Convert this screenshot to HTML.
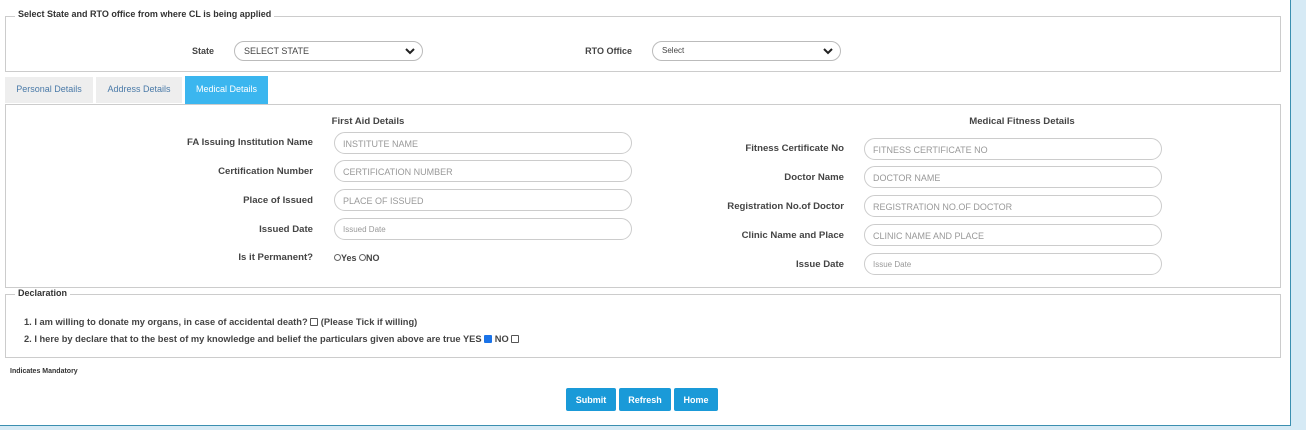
<!DOCTYPE html>
<html><head><meta charset="utf-8"><style>
*{box-sizing:border-box;margin:0;padding:0}
body{width:1306px;height:430px;background:#d6eaf5;font-family:"Liberation Sans",Arial,sans-serif;position:relative;overflow:hidden;color:#333}
.main{position:absolute;left:0;top:0;width:1291px;height:426px;background:#fff;border-right:1px solid #3b8fb0;border-bottom:1px solid #3b8fb0}
.a{position:absolute;white-space:nowrap}
.box{position:absolute;border:1px solid #ccc}
.lg{position:absolute;background:#fff;font-size:9px;font-weight:bold;color:#333;padding:0 3px}
.lb{position:absolute;font-size:9.6px;font-weight:bold;color:#444;text-align:right;white-space:nowrap}
.in{position:absolute;width:298px;height:22px;border:1px solid #ccc;border-radius:11px;font-size:9px;color:#999;padding:6px 0 0 8px;white-space:nowrap}
.sel{position:absolute;height:20px;border:1px solid #bbb;border-radius:10px;font-size:9px;color:#444;padding:4px 0 0 9px}
.sel svg{position:absolute;right:7px;top:5px}
.tab{position:absolute;top:77px;height:26px;background:#eee;font-size:9px;color:#4a7aa8;text-align:center;padding-top:7px}
.btn{position:absolute;top:388px;height:23px;background:#1a9ad8;color:#fff;font-size:9px;font-weight:bold;text-align:center;padding-top:7px;border-radius:2px}
.cb{display:inline-block;width:8px;height:8px;border:1px solid #555;border-radius:1px;vertical-align:-1px}
.rd{display:inline-block;width:7px;height:7px;border:1px solid #666;border-radius:50%;vertical-align:0}
</style></head><body>
<div class="main">
<div class="box" style="left:5px;top:16px;width:1276px;height:56px"></div>
<div class="lg" style="left:15px;top:9px">Select State and RTO office from where CL is being applied</div>
<div class="lb" style="left:150px;width:64px;top:46px;font-size:9px">State</div>
<div class="sel" style="left:234px;top:41px;width:189px">SELECT STATE<svg width="10" height="8" viewBox="0 0 10 8"><path d="M1 2l4 4 4-4" fill="none" stroke="#222" stroke-width="2"/></svg></div>
<div class="lb" style="left:560px;width:72px;top:46px;font-size:9px">RTO Office</div>
<div class="sel" style="left:652px;top:41px;width:189px;font-size:8px">Select<svg width="10" height="8" viewBox="0 0 10 8"><path d="M1 2l4 4 4-4" fill="none" stroke="#222" stroke-width="2"/></svg></div>

<div class="tab" style="left:5px;width:88px">Personal Details</div>
<div class="tab" style="left:96px;width:86px">Address Details</div>
<div class="tab" style="left:185px;width:83px;top:76px;height:28px;background:#3bb6ef;color:#fff;padding-top:8px">Medical Details</div>

<div class="box" style="left:5px;top:104px;width:1276px;height:184px"></div>
<div class="lb" style="left:298px;width:140px;text-align:center;top:116px">First Aid Details</div>
<div class="lb" style="left:100px;width:213px;top:137px">FA Issuing Institution Name</div>
<div class="in" style="left:334px;top:132px">INSTITUTE NAME</div>
<div class="lb" style="left:100px;width:213px;top:166px">Certification Number</div>
<div class="in" style="left:334px;top:160px">CERTIFICATION NUMBER</div>
<div class="lb" style="left:100px;width:213px;top:195px">Place of Issued</div>
<div class="in" style="left:334px;top:189px">PLACE OF ISSUED</div>
<div class="lb" style="left:100px;width:213px;top:224px">Issued Date</div>
<div class="in" style="left:334px;top:218px;font-size:8px">Issued Date</div>
<div class="lb" style="left:100px;width:213px;top:252px">Is it Permanent?</div>
<div class="a" style="left:334px;top:253px;font-size:9px;font-weight:bold;color:#444"><span class="rd"></span>Yes <span class="rd"></span>NO</div>

<div class="lb" style="left:940px;width:164px;text-align:center;top:116px">Medical Fitness Details</div>
<div class="lb" style="left:640px;width:204px;top:143px">Fitness Certificate No</div>
<div class="in" style="left:864px;top:138px">FITNESS CERTIFICATE NO</div>
<div class="lb" style="left:640px;width:204px;top:172px">Doctor Name</div>
<div class="in" style="left:864px;top:166px">DOCTOR NAME</div>
<div class="lb" style="left:640px;width:204px;top:201px">Registration No.of Doctor</div>
<div class="in" style="left:864px;top:195px">REGISTRATION NO.OF DOCTOR</div>
<div class="lb" style="left:640px;width:204px;top:230px">Clinic Name and Place</div>
<div class="in" style="left:864px;top:224px">CLINIC NAME AND PLACE</div>
<div class="lb" style="left:640px;width:204px;top:259px">Issue Date</div>
<div class="in" style="left:864px;top:253px;font-size:8px">Issue Date</div>

<div class="box" style="left:5px;top:294px;width:1276px;height:64px"></div>
<div class="lg" style="left:15px;top:288px">Declaration</div>
<div class="a" style="left:24px;top:317px;font-size:9.3px;font-weight:bold;color:#444">1. I am willing to donate my organs, in case of accidental death? <span class="cb"></span> (Please Tick if willing)</div>
<div class="a" style="left:24px;top:334px;font-size:9.3px;font-weight:bold;color:#444">2. I here by declare that to the best of my knowledge and belief the particulars given above are true YES <span class="cb" style="background:#1a73e8;border-color:#1a73e8"></span> NO <span class="cb"></span></div>
<div class="a" style="left:10px;top:368px;font-size:7px;font-weight:bold;color:#333">Indicates Mandatory</div>

<div class="btn" style="left:566px;width:50px">Submit</div>
<div class="btn" style="left:619px;width:52px">Refresh</div>
<div class="btn" style="left:674px;width:44px">Home</div>
</div>
</body></html>
